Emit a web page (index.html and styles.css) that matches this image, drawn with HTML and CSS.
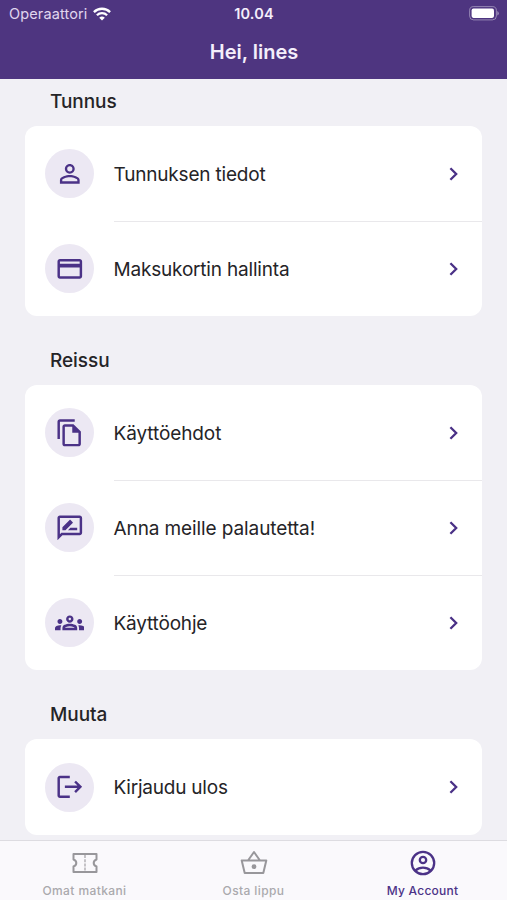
FILE: index.html
```html
<!DOCTYPE html>
<html lang="fi">
<head>
<meta charset="utf-8">
<title>Hei, lines</title>
<link rel="stylesheet" href="styles.css">
</head>
<body>
<svg class="defs" aria-hidden="true">
  <symbol id="chevron" viewBox="0 0 10 16"><path d="M1.4 2.200L7.200 8l-5.800 5.800" fill="none" stroke="currentColor" stroke-width="2.300"/></symbol>
</svg>
<div class="screen">
  <header class="header">
    <div class="status">
      <div class="carrier"><span class="carrier-name">Operaattori</span>
        <svg class="wifi" viewBox="0 0 18 14"><g fill="none" stroke="currentColor" stroke-width="2.3"><path d="M.9 5.1a11.5 11.5 0 0 1 16.2 0"/><path d="M3.9 8.2a7.2 7.2 0 0 1 10.2 0"/></g><path d="M9 13.6l-2.8-2.8a4 4 0 0 1 5.6 0z" fill="currentColor"/></svg>
      </div>
      <span class="time">10.04</span>
      <svg class="battery" viewBox="0 0 30 15"><rect x=".6" y=".6" width="26.8" height="13.3" rx="4" fill="none" stroke="currentColor" stroke-width="1" opacity=".4"/><rect x="2.6" y="2.6" width="22.4" height="9.3" rx="1.8" fill="currentColor"/><path d="M28.4 5v4.6q1.3-.7 1.3-2.3T28.4 5z" fill="currentColor" opacity=".5"/></svg>
    </div>
    <h1 class="title">Hei, lines</h1>
  </header>
  <main class="content">
    <h2 class="heading">Tunnus</h2>
    <section class="card">
      <div class="row"><span class="badge"><svg viewBox="0 0 24 24"><path d="M12 5.9a2.1 2.1 0 1 1 0 4.2 2.1 2.1 0 0 1 0-4.2m0 9c2.97 0 6.1 1.46 6.1 2.1v1.1H5.9V17c0-.64 3.13-2.1 6.1-2.1M12 4C9.79 4 8 5.79 8 8s1.79 4 4 4 4-1.79 4-4-1.79-4-4-4zm0 9c-2.67 0-8 1.34-8 4v3h16v-3c0-2.66-5.33-4-8-4z"/></svg></span><div class="body"><span class="label">Tunnuksen tiedot</span><svg class="chevron"><use href="#chevron"/></svg></div></div>
      <div class="row"><span class="badge"><svg viewBox="0 0 24 24"><path d="M20 4H4c-1.11 0-1.99.89-1.99 2L2 18c0 1.11.89 2 2 2h16c1.11 0 2-.89 2-2V6c0-1.11-.89-2-2-2zm0 14H4v-7h16v7zm0-10H4V6h16v2z"/></svg></span><div class="body"><span class="label">Maksukortin hallinta</span><svg class="chevron"><use href="#chevron"/></svg></div></div>
    </section>
    <h2 class="heading">Reissu</h2>
    <section class="card">
      <div class="row"><span class="badge"><svg viewBox="0 0 24 24"><path d="M16 1H4c-1.1 0-2 .9-2 2v14h2V3h12V1zm-1 4H8c-1.1 0-1.99.9-1.99 2L6 21c0 1.1.89 2 1.99 2H19c1.1 0 2-.9 2-2V11l-6-6zM8 21V7h6v5h5v9H8z"/></svg></span><div class="body"><span class="label tight">Käyttöehdot</span><svg class="chevron"><use href="#chevron"/></svg></div></div>
      <div class="row"><span class="badge"><svg viewBox="0 0 24 24"><path d="M20 2H4c-1.1 0-2 .9-2 2v18l4-4h14c1.1 0 2-.9 2-2V4c0-1.1-.9-2-2-2zm0 14H5.17L4 17.17V4h16v12zM10.5 14H18v-2h-5.5zM14.36 8.13c.2-.2.2-.51 0-.71l-1.77-1.77c-.2-.2-.51-.2-.71 0L6 11.53V14h2.47l5.89-5.87z"/></svg></span><div class="body"><span class="label tight">Anna meille palautetta!</span><svg class="chevron"><use href="#chevron"/></svg></div></div>
      <div class="row"><span class="badge"><svg viewBox="0 0 24 24"><path d="M4 13c1.1 0 2-.9 2-2s-.9-2-2-2-2 .9-2 2 .9 2 2 2zm1.13 1.1C4.76 14.04 4.39 14 4 14c-.99 0-1.93.21-2.78.58C.48 14.9 0 15.62 0 16.43V18h4.5v-1.61c0-.83.23-1.61.63-2.29zM20 13c1.1 0 2-.9 2-2s-.9-2-2-2-2 .9-2 2 .9 2 2 2zm4 3.43c0-.81-.48-1.53-1.22-1.85-.85-.37-1.79-.58-2.78-.58-.39 0-.76.04-1.13.1.4.68.63 1.46.63 2.29V18H24v-1.57zM16.24 13.65c-1.17-.52-2.61-.9-4.24-.9s-3.07.39-4.24.9C6.68 14.13 6 15.21 6 16.39V18h12v-1.61c0-1.18-.68-2.26-1.76-2.74zM8.07 16c.09-.23.13-.39.91-.69.97-.38 1.99-.56 3.02-.56s2.05.18 3.02.56c.77.3.81.46.91.69H8.07zM12 8c.55 0 1 .45 1 1s-.45 1-1 1-1-.45-1-1 .45-1 1-1m0-2c-1.66 0-3 1.34-3 3s1.34 3 3 3 3-1.34 3-3-1.34-3-3-3z"/></svg></span><div class="body"><span class="label">Käyttöohje</span><svg class="chevron"><use href="#chevron"/></svg></div></div>
    </section>
    <h2 class="heading">Muuta</h2>
    <section class="card">
      <div class="row"><span class="badge"><svg viewBox="0 0 24 24"><path d="M17 7l-1.41 1.41L18.17 11H8v2h10.17l-2.58 2.58L17 17l5-5-5-5zM4 5h8V3H4c-1.1 0-2 .9-2 2v14c0 1.1.9 2 2 2h8v-2H4V5z"/></svg></span><div class="body"><span class="label loose-fit">Kirjaudu ulos</span><svg class="chevron"><use href="#chevron"/></svg></div></div>
    </section>
  </main>
  <nav class="tabs">
    <div class="tab"><svg viewBox="0 0 30 30"><g fill="none" stroke="currentColor" stroke-width="2"><path d="M3.500 6h23v5.500c-2 .8-2.800 2-2.800 3.500s.8 2.700 2.800 3.500V24h-23v-5.500c2-.8 2.800-2 2.800-3.500s-.8-2.700-2.800-3.500z" stroke-linejoin="round"/><path d="M15 7v16" stroke-width="1.100" stroke-dasharray="3 1.200"/></g></svg><span>Omat matkani</span></div>
    <div class="tab"><svg viewBox="0 0 30 30"><path d="M2.700 12.500h24.600L24.300 25H5.700zM9 12.500L15 4l6 8.500" fill="none" stroke="currentColor" stroke-width="2" stroke-linejoin="round"/><circle cx="15" cy="18.700" r="2.400" fill="currentColor"/></svg><span>Osta lippu</span></div>
    <div class="tab active"><svg viewBox="0 0 30 30"><g fill="none" stroke="currentColor" stroke-width="2.300"><circle cx="15" cy="15" r="11.200"/><circle cx="15" cy="12" r="3.200"/><path d="M7.300 22.600c4.400-3.900 11-3.900 15.400 0"/></g></svg><span>My Account</span></div>
  </nav>
</div>
</body>
</html>
```
FILE: styles.css
```css
* { box-sizing: border-box; }
body { margin: 0; font-family: Inter, "Liberation Sans", sans-serif; color: #252427; background: #f1f0f5; }
.defs { position: absolute; width: 0; height: 0; }
.screen { width: 507px; height: 900px; display: flex; flex-direction: column; overflow: hidden; }
.header { flex: none; height: 79px; background: #4e3580; color: #f4eefb; }
.status { height: 27px; padding: 0 8px 0 9px; display: grid; grid-template-columns: 1fr auto 1fr; align-items: center; }
.carrier { display: flex; align-items: center; gap: 6px; font-size: 14.5px; letter-spacing: .13px; color: #e0d6ef; }
.wifi { width: 18px; height: 14px; color: #fff; }
.time { font-size: 14.5px; font-weight: 600; letter-spacing: .2px; }
.battery { width: 30px; height: 15px; justify-self: end; color: #fff; }
.title { margin: 0; height: 51px; line-height: 51px; padding-left: 1px; font-size: 20px; font-weight: 600; text-align: center; }
.content { flex: 1; min-height: 0; padding: 0 25px; overflow: hidden; }
.heading { margin: 0; padding: 30px 25px 10px; font-size: 19px; line-height: 29px; font-weight: 500; letter-spacing: -.05px; }
.heading:first-child { padding-top: 8px; }
.card { background: #fff; border-radius: 12px; overflow: hidden; }
.row { height: 95.1px; padding-left: 20px; display: flex; align-items: center; gap: 20px; }
.badge { flex: none; width: 49px; height: 49px; border-radius: 50%; background: #ece8f3; display: flex; align-items: center; justify-content: center; }
.badge svg { width: 29.6px; height: 29.6px; fill: #4b3287; }
.body { flex: 1; height: 100%; padding-right: 23px; display: flex; align-items: center; justify-content: space-between; }
.row + .row .body { border-top: 1px solid #e9e8eb; }
.label { font-size: 19px; letter-spacing: -.19px; white-space: nowrap; padding-top: 1px; margin-left: -.5px; }
.label.tight { letter-spacing: -.1px; }
.label.loose-fit { letter-spacing: -.22px; }
.chevron { width: 10px; height: 16px; color: #4b3287; }
.tabs { flex: none; height: 60px; border-top: 1px solid #dddce1; background: #faf9fc; display: grid; grid-template-columns: repeat(3, 1fr); }
.tab { display: flex; flex-direction: column; align-items: center; padding-top: 7px; color: #98979b; font-size: 12px; font-weight: 500; letter-spacing: .4px; }
.tab svg { width: 30px; height: 30px; }
.tab span { line-height: 16px; margin-top: 5px; }
.tab:not(.active) span { color: #aaa9ad; }
.tab.active { color: #4b3287; letter-spacing: .25px; }
```
